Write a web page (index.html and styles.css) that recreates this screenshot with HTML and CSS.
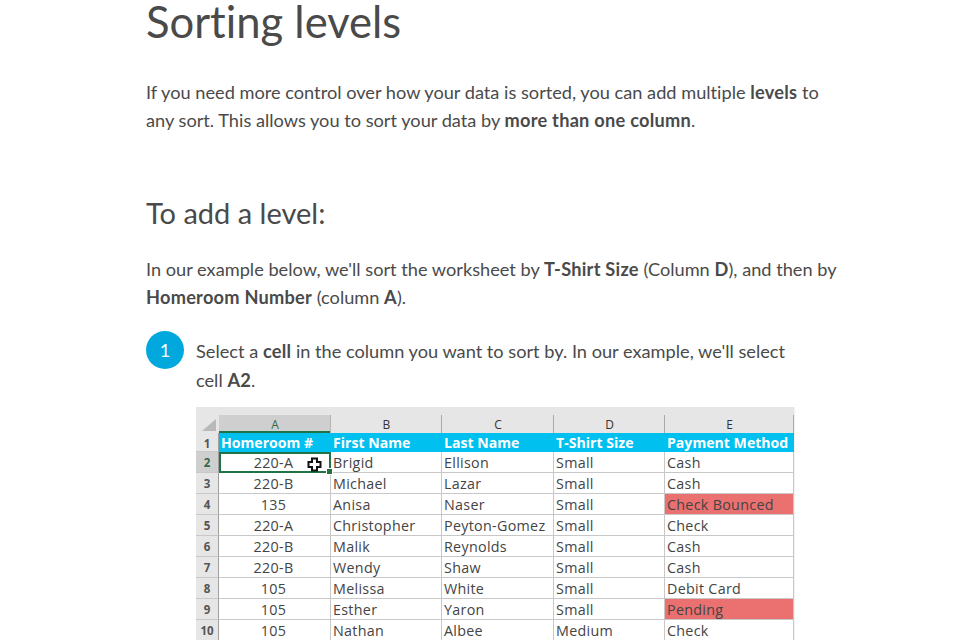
FILE: index.html
```html
<!DOCTYPE html>
<html lang="en">
<head>
<meta charset="utf-8">
<title>Sorting levels</title>
<link rel="stylesheet" href="styles.css">
</head>
<body>
<main class="article">
  <h1 class="title">Sorting levels</h1>
  <p class="para intro">If you need more control over how your data is sorted, you can add multiple <b>levels</b> to any sort. This allows you to sort your data by <b>more than one column</b>.</p>
  <h2 class="subtitle">To add a level:</h2>
  <p class="para example">In our example below, we'll sort the worksheet by <b>T-Shirt Size</b> (Column <b>D</b>), and then by <b>Homeroom Number</b> (column <b>A</b>).</p>
  <div class="step">
    <div class="badge">1</div>
    <p class="step-text">Select a <b>cell</b> in the column you want to sort by. In our example, we'll select cell <b>A2</b>.</p>
  </div>
  <div class="sheet">
    <div class="grid">
      <div class="corner"><svg class="corner-mark" width="16" height="12" viewBox="0 0 16 12"><path d="M15 0V12H1Z" fill="#b9b9b9"/></svg></div>
      <div class="col col-active">A</div><div class="col">B</div><div class="col">C</div><div class="col">D</div><div class="col">E</div>

      <div class="row">1</div>
      <div class="hd">Homeroom #</div><div class="hd">First Name</div><div class="hd">Last Name</div><div class="hd">T-Shirt Size</div><div class="hd">Payment Method</div>

      <div class="row row-active">2</div>
      <div class="c ctr selected">220-A
        <svg class="cursor" width="15" height="15" viewBox="0 0 15 15"><path d="M5 1.500h5v3.500h3.500v5H10v3.500H5V10H1.500V5H5Z" fill="#fff" stroke="#111" stroke-width="2"/></svg>
        <span class="handle"></span>
      </div><div class="c">Brigid</div><div class="c">Ellison</div><div class="c">Small</div><div class="c">Cash</div>

      <div class="row">3</div>
      <div class="c ctr">220-B</div><div class="c">Michael</div><div class="c">Lazar</div><div class="c">Small</div><div class="c">Cash</div>

      <div class="row">4</div>
      <div class="c ctr">135</div><div class="c">Anisa</div><div class="c">Naser</div><div class="c">Small</div><div class="c red">Check Bounced</div>

      <div class="row">5</div>
      <div class="c ctr">220-A</div><div class="c">Christopher</div><div class="c">Peyton-Gomez</div><div class="c">Small</div><div class="c">Check</div>

      <div class="row">6</div>
      <div class="c ctr">220-B</div><div class="c">Malik</div><div class="c">Reynolds</div><div class="c">Small</div><div class="c">Cash</div>

      <div class="row">7</div>
      <div class="c ctr">220-B</div><div class="c">Wendy</div><div class="c">Shaw</div><div class="c">Small</div><div class="c">Cash</div>

      <div class="row">8</div>
      <div class="c ctr">105</div><div class="c">Melissa</div><div class="c">White</div><div class="c">Small</div><div class="c">Debit Card</div>

      <div class="row">9</div>
      <div class="c ctr">105</div><div class="c">Esther</div><div class="c">Yaron</div><div class="c">Small</div><div class="c red">Pending</div>

      <div class="row">10</div>
      <div class="c ctr">105</div><div class="c">Nathan</div><div class="c">Albee</div><div class="c">Medium</div><div class="c">Check</div>
    </div>
  </div>
</main>
</body>
</html>
```
FILE: styles.css
```css
html, body { margin: 0; padding: 0; height: 644px; overflow: hidden; background: #fff; }
body { font-family: Lato, "Noto Sans", sans-serif; color: #4a4a4a; font-variant-ligatures: none; }
b { font-weight: 700; letter-spacing: 0.25px; }
.article { width: 695px; margin-left: 146px; }
.title { margin: -7px 0 0; font-size: 43.6px; line-height: 56px; font-weight: 400; color: #4a4a4a; }
.para { margin: 0; font-size: 18.2px; line-height: 28px; }
.intro { margin-top: 29px; }
.subtitle { margin: 61px 0 0; font-size: 29px; line-height: 36px; font-weight: 400; }
.example { margin-top: 24px; }
.step { display: flex; gap: 12px; margin-top: 14px; }
.badge { flex: none; width: 38px; height: 38px; margin-top: 6px; border-radius: 50%; background: #00a8de; color: #fff; font-size: 18px; line-height: 38px; text-align: center; }
.step-text { margin: 12px 0 0; width: 610px; font-size: 18.2px; line-height: 29px; }
.sheet { margin: 12px 0 0 50px; width: 599px; height: 233px; overflow: hidden; background: #f2f2f2; }
.grid { display: grid; grid-template-columns: 23px 112px 111px 112px 111px 129px; grid-template-rows: 26px 19px repeat(9, 21px); font-family: "Open Sans", sans-serif; font-size: 14.3px; color: #444; }
.corner { background: #e6e6e6; display: flex; align-items: flex-end; justify-content: flex-end; padding: 0 2px 2px 0; }
.col { position: relative; background: #e6e6e6; font-size: 12px; text-align: center; line-height: 35px; color: #333; }
.col::after { content: ""; position: absolute; right: 0; top: 8px; bottom: 0; width: 1px; background: #a9a9a9; }
.col-active { background: linear-gradient(#e6e6e6 8px, #cfcfcf 8px); box-shadow: inset 0 -2px 0 #217346; color: #2f6a4a; }
.col-active::after { background: #b5b5b5; }
.row { background: #e6e6e6; border-right: 1px solid #9f9f9f; border-bottom: 1px solid #c8c8c8; font-size: 11.5px; font-weight: 700; text-align: center; line-height: 22px; box-sizing: border-box; color: #555; }
.row-active { background: #cfcfcf; color: #2f6a4a; }
.hd { background: #00c0ef; color: #fff; font-weight: 700; font-size: 14.1px; padding-left: 2px; line-height: 20px; white-space: nowrap; overflow: hidden; }
.c { position: relative; background: #fff; border-right: 1px solid #c8c8c8; border-bottom: 1px solid #c8c8c8; box-sizing: border-box; padding-left: 2px; line-height: 22px; letter-spacing: 0.3px; white-space: nowrap; }
.ctr { text-align: center; padding: 0 2px 0 0; }
.red { background: #eb7070; }
.selected { outline: 2px solid #217346; outline-offset: -2px; z-index: 1; }
.cursor { position: absolute; right: 8px; top: 5px; }
.handle { position: absolute; right: -3px; bottom: -3px; width: 5px; height: 5px; background: #217346; border: 1px solid #fff; }
```
